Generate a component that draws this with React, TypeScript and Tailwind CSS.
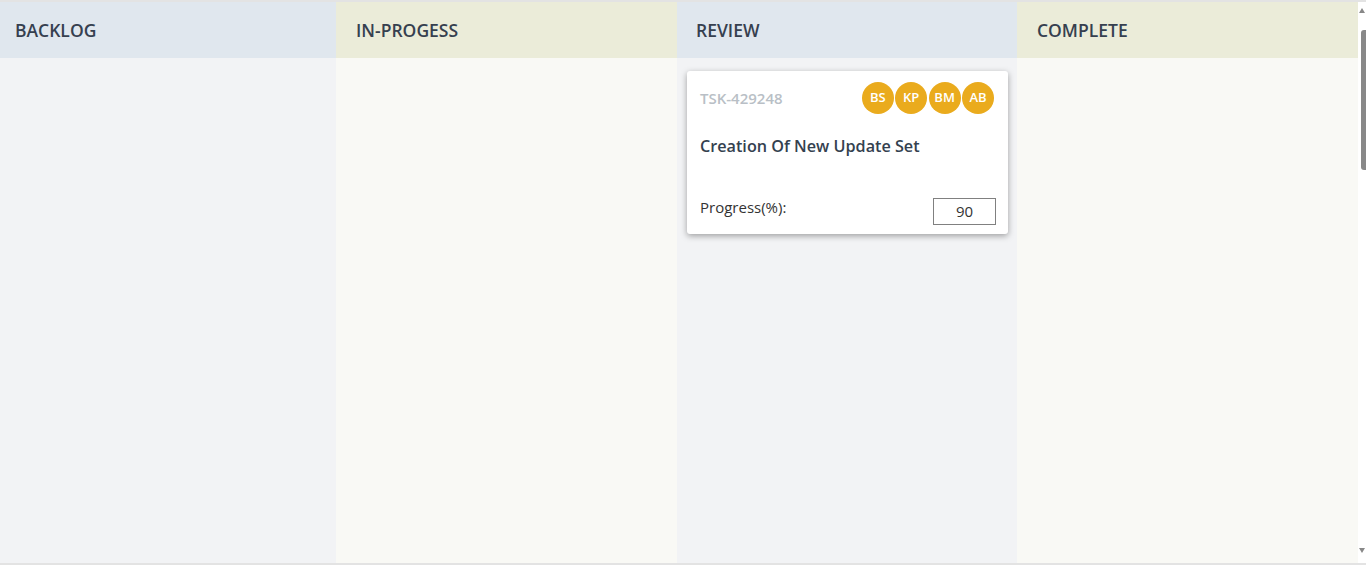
import React from 'react';

interface Task {
    id: string;
    title: string;
    progress: number;
    assignees: string[];
}

interface Column {
    key: string;
    label: string;
    width: string;
    pad: string;
    head: string;
    body: string;
    tasks: Task[];
}

const columns: Column[] = [
    { key: 'backlog', label: 'BACKLOG', width: 'w-[336px]', pad: 'pl-[15px]', head: 'bg-[#e0e7ee]', body: 'bg-[#f2f3f5]', tasks: [] },
    { key: 'progress', label: 'IN-PROGESS', width: 'w-[341px]', pad: 'pl-[20px]', head: 'bg-[#ebecd9]', body: 'bg-[#f9f9f5]', tasks: [] },
    {
        key: 'review',
        label: 'REVIEW',
        width: 'w-[340px]',
        pad: 'pl-[19px]',
        head: 'bg-[#e0e7ee]',
        body: 'bg-[#f2f3f5]',
        tasks: [
            {
                id: 'TSK-429248',
                title: 'Creation Of New Update Set',
                progress: 90,
                assignees: ['BS', 'KP', 'BM', 'AB']
            }
        ]
    },
    { key: 'complete', label: 'COMPLETE', width: 'w-[341px]', pad: 'pl-[20px]', head: 'bg-[#ebecd9]', body: 'bg-[#f9f9f5]', tasks: [] }
];

const TaskCard: React.FC<{ task: Task }> = ({ task }) => (
    <div className="bg-white rounded-[3px] shadow-[0_2px_6px_rgba(0,0,0,0.35)] pl-[13px] pr-[12px] pt-[11px] pb-[9px]">
        <div className="flex items-center justify-between h-[32px]">
            <span className="text-[15px] font-semibold text-[#b9bfc6]">{task.id}</span>
            <div className="flex gap-[1.4px] mr-[2px]">
                {task.assignees.map((a) => (
                    <div
                        key={a}
                        className="w-[32px] h-[32px] rounded-full bg-[#eaab1d] text-white text-[13px] font-semibold flex items-center justify-center"
                    >
                        {a}
                    </div>
                ))}
            </div>
        </div>
        <p className="mt-[21px] text-[16.2px] leading-[22px] font-semibold text-[#34414f]">{task.title}</p>
        <div className="mt-[41px] flex items-start justify-between">
            <span className="text-[15px] leading-[19px] text-[#333]">Progress(%):</span>
            <div className="w-[63px] h-[27px] border border-[#808080] flex items-center justify-center text-[15px] text-[#333]">
                {task.progress}
            </div>
        </div>
    </div>
);

export default function App() {
    return (
        <div
            className="h-[565px] w-full flex flex-col bg-white overflow-hidden"
            style={{ fontFamily: '"Open Sans", "Noto Sans", sans-serif' }}
        >
            <div className="flex-1 flex border-t-2 border-b-2 border-[#e3e3e3] min-h-0">
                {/* Board */}
                <div className="flex-1 flex min-w-0">
                    {columns.map((col) => (
                        <div key={col.key} className={`${col.width} shrink-0 flex flex-col`}>
                            <div className={`h-[56px] shrink-0 flex items-center ${col.pad} ${col.head}`}>
                                <h2 className="text-[17.5px] font-semibold text-[#36404f]">{col.label}</h2>
                            </div>
                            <div className={`flex-1 pl-[10px] pr-[9px] pt-[13px] flex flex-col gap-3 ${col.body}`}>
                                {col.tasks.map((t) => (
                                    <TaskCard key={t.id} task={t} />
                                ))}
                            </div>
                        </div>
                    ))}
                </div>

                {/* Scrollbar */}
                <div className="w-[8px] shrink-0 bg-white flex flex-col items-end py-[4px]">
                    <div className="w-0 h-0 border-l-[3px] border-r-[3px] border-b-[5px] border-l-transparent border-r-transparent border-b-[#888] mr-[1px] mt-[2px]" />
                    <div className="w-[5px] h-[140px] bg-[#888] rounded-l-[3px] mt-[17px]" />
                    <div className="flex-1" />
                    <div className="w-0 h-0 border-l-[3px] border-r-[3px] border-t-[5px] border-l-transparent border-r-transparent border-t-[#888] mr-[1px] mb-[6px]" />
                </div>
            </div>
        </div>
    );
}
